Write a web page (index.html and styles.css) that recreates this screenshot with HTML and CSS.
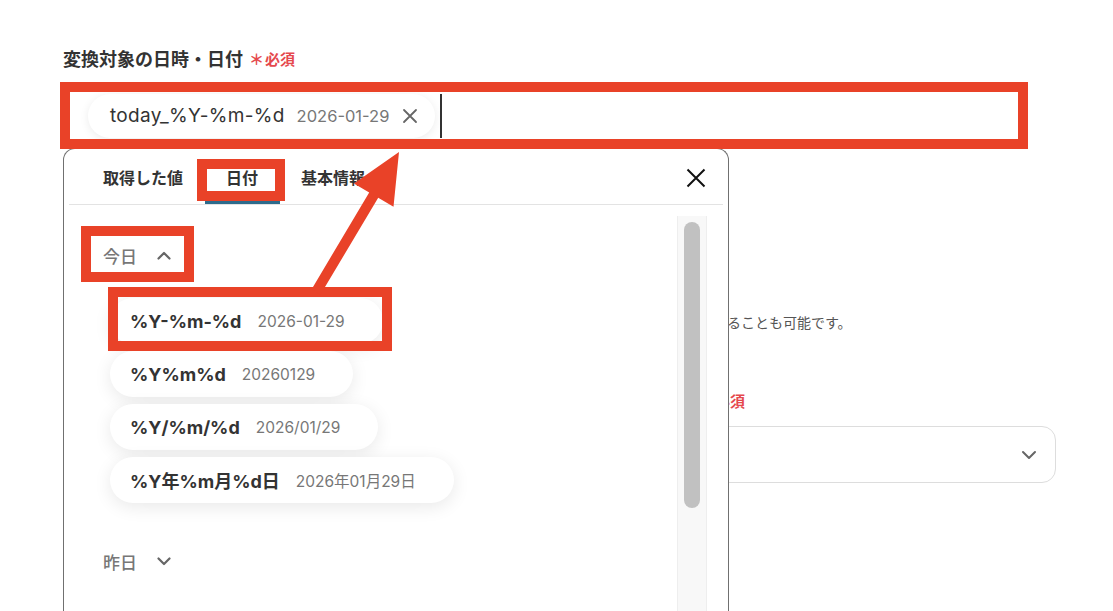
FILE: index.html
```html
<!DOCTYPE html>
<html lang="ja">
<head>
<meta charset="utf-8">
<title>日付変換</title>
<link rel="stylesheet" href="styles.css">
</head>
<body>
<div class="page">
  <div class="field">
    <div class="label">変換対象の日時・日付<span class="req"><span class="ast">＊</span>必須</span></div>
    <div class="input">
      <div class="chip">
        <span class="chip-name">today_%Y-%m-%d</span>
        <span class="chip-val">2026-01-29</span>
        <svg class="chip-x" width="16" height="16" viewBox="0 0 16 16"><path d="M2 2L14 14M14 2L2 14" stroke="#666" stroke-width="1.8" fill="none" stroke-linecap="round"/></svg>
      </div>
      <span class="caret"></span>
    </div>
  </div>

  <p class="desc">変換することも可能です。</p>

  <div class="field field2">
    <div class="label">変換後の日付フォーマット（候補にない場合は任意の書式を直接入力も可能）<span class="req"><span class="ast">＊</span>必須</span></div>
    <div class="select">
      <svg width="16" height="10" viewBox="0 0 16 10"><path d="M2 2L8 8L14 2" stroke="#666" stroke-width="2" fill="none" stroke-linecap="round" stroke-linejoin="round"/></svg>
    </div>
  </div>

  <div class="popup">
    <div class="pop-head">
      <div class="tab">取得した値</div>
      <div class="tab active">日付</div>
      <div class="tab">基本情報</div>
      <svg class="close" width="20" height="20" viewBox="0 0 20 20"><path d="M1.5 1.5L18.5 18.5M18.5 1.5L1.5 18.5" stroke="#111" stroke-width="2" fill="none"/></svg>
    </div>
    <div class="pop-body">
      <div class="list">
        <div class="sec">今日
          <svg width="14" height="9" viewBox="0 0 14 9"><path d="M1.5 7.5L7 2L12.5 7.5" stroke="#666" stroke-width="2.2" fill="none" stroke-linecap="round" stroke-linejoin="round"/></svg>
        </div>
        <div class="items">
          <div class="pill"><b>%Y-%m-%d</b><span>2026-01-29</span></div>
          <div class="pill"><b>%Y%m%d</b><span>20260129</span></div>
          <div class="pill"><b>%Y/%m/%d</b><span>2026/01/29</span></div>
          <div class="pill"><b>%Y年%m月%d日</b><span>2026年01月29日</span></div>
        </div>
        <div class="sec sec2">昨日
          <svg width="14" height="9" viewBox="0 0 14 9"><path d="M1.5 1.5L7 7L12.5 1.5" stroke="#666" stroke-width="2.2" fill="none" stroke-linecap="round" stroke-linejoin="round"/></svg>
        </div>
      </div>
      <div class="track"><div class="thumb"></div></div>
    </div>
  </div>

  <svg class="annot" width="1113" height="611" viewBox="0 0 1113 611">
    <g fill="none" stroke="#e94228" stroke-width="10">
      <rect x="65" y="87" width="958" height="57"/>
      <rect x="202" y="164" width="78" height="32"/>
      <rect x="86" y="231" width="103" height="46"/>
      <rect x="113" y="292" width="274" height="54"/>
    </g>
    <polygon fill="#e94228" points="320.5,294.6 378.2,197.7 393.5,206.7 399,152 353.9,183.5 369.2,192.5 311.5,289.4"/>
  </svg>
</div>
</body>
</html>
```

FILE: styles.css
```css
* {
  box-sizing: border-box;
  margin: 0;
  padding: 0;
}

html, body {
  height: 100%;
}

body {
  font-family: Inter, "Noto Sans CJK JP", sans-serif;
  color: #333;
  background: #fff;
  overflow: hidden;
}

.page {
  position: relative;
  height: 611px;
  padding: 48px 57px 0 63px;
}

.label {
  display: flex;
  align-items: center;
  font-size: 18px;
  font-weight: 700;
  line-height: 24px;
  color: #333;
  white-space: nowrap;
}

.req {
  display: inline-flex;
  align-items: center;
  margin-left: 6px;
  font-size: 15px;
  font-weight: 700;
  color: #e5484d;
}

.ast {
  margin-right: 1px;
}

.input {
  display: flex;
  align-items: center;
  width: 960px;
  height: 57px;
  margin-top: 15px;
  padding-left: 24px;
  border: 1px solid #ddd;
  border-radius: 14px;
}

.chip {
  display: flex;
  align-items: center;
  height: 44px;
  padding: 0 17px 0 22px;
  border-radius: 22px;
  background: #fff;
  box-shadow: 0 2px 10px rgba(0, 0, 0, 0.08);
}

.chip-name {
  font-size: 19px;
  letter-spacing: 0.3px;
  color: #333;
}

.chip-val {
  margin-left: 12px;
  font-size: 16.5px;
  color: #777;
}

.chip-x {
  margin-left: 13px;
}

.caret {
  width: 2px;
  height: 44px;
  margin-left: 5px;
  background: #333;
}

.desc {
  margin-top: 169px;
  padding-left: 622px;
  font-size: 14px;
  line-height: 20px;
  color: #555;
  white-space: nowrap;
}

.field2 {
  margin-top: 57px;
}

.select {
  display: flex;
  align-items: center;
  justify-content: flex-end;
  height: 57px;
  margin-top: 12px;
  padding-right: 18px;
  border: 1px solid #ddd;
  border-radius: 14px;
}

.popup {
  position: absolute;
  left: 63px;
  top: 148px;
  width: 666px;
  height: 480px;
  display: flex;
  flex-direction: column;
  background: #fff;
  border: 1px solid #707070;
  border-bottom: none;
  border-radius: 12px 12px 0 0;
}

.pop-head {
  display: flex;
  margin: 0 5px;
  padding: 0 17px 0 12.5px;
  border-bottom: 1px solid #e3e3e3;
}

.tab {
  padding: 18px 21.5px 12px;
  font-size: 16px;
  font-weight: 600;
  line-height: 22px;
  color: #333;
  border-bottom: 3px solid transparent;
}

.tab.active {
  border-bottom-color: #2d6b8c;
}

.close {
  margin-left: auto;
  margin-top: 19px;
}

.pop-body {
  flex: 1;
  display: flex;
  min-height: 0;
  padding: 11px 21px 0 0;
}

.list {
  flex: 1;
  padding: 27px 0 0 39px;
}

.sec {
  display: flex;
  align-items: center;
  height: 24px;
  font-size: 17px;
  font-weight: 500;
  color: #777;
}

.sec svg {
  margin-left: 20px;
}

.sec2 {
  margin-top: 46px;
}

.items {
  display: flex;
  flex-direction: column;
  align-items: flex-start;
  gap: 7px;
  margin: 31px 0 0 7px;
}

.pill {
  display: flex;
  align-items: center;
  height: 46px;
  padding: 0 38px 0 20px;
  border-radius: 23px;
  background: #fff;
  box-shadow: 0 4px 18px rgba(0, 0, 0, 0.09);
}

.pill b {
  font-size: 18px;
  font-weight: 700;
  color: #333;
}

.pill span {
  margin-left: 16px;
  font-size: 15.5px;
  color: #777;
}

.track {
  width: 30px;
  padding-top: 6px;
  background: #f8f8f8;
  border-left: 1px solid #eee;
  border-right: 1px solid #eee;
}

.thumb {
  width: 16px;
  height: 286px;
  margin: 0 auto;
  border-radius: 8px;
  background: #c1c1c1;
}

.annot {
  position: absolute;
  left: 0;
  top: 0;
  pointer-events: none;
}
```
